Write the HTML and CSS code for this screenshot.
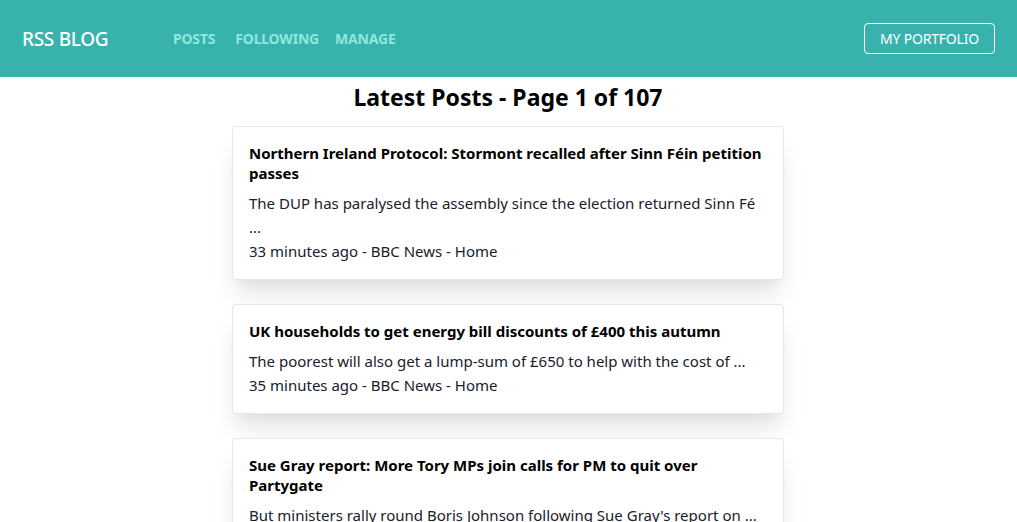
FILE: index.html
```html
<!DOCTYPE html>
<html lang="en">
<head>
<meta charset="utf-8">
<title>RSS Blog</title>
<link rel="stylesheet" href="styles.css">
</head>
<body>
<header class="topbar">
  <div class="brand">RSS BLOG</div>
  <nav class="nav">
    <a class="nav-link" href="#">POSTS</a>
    <a class="nav-link" href="#">FOLLOWING</a>
    <a class="nav-link" href="#">MANAGE</a>
  </nav>
  <a class="portfolio-btn" href="#">MY PORTFOLIO</a>
</header>
<main class="content">
  <h1 class="page-title">Latest Posts - Page 1 of 107</h1>
  <div class="posts">
    <article class="card">
      <h2 class="card-title">Northern Ireland Protocol: Stormont recalled after Sinn Féin petition passes</h2>
      <p class="card-desc">The DUP has paralysed the assembly since the election returned Sinn Fé ...</p>
      <p class="card-meta">33 minutes ago - BBC News - Home</p>
    </article>
    <article class="card">
      <h2 class="card-title">UK households to get energy bill discounts of £400 this autumn</h2>
      <p class="card-desc">The poorest will also get a lump-sum of £650 to help with the cost of ...</p>
      <p class="card-meta">35 minutes ago - BBC News - Home</p>
    </article>
    <article class="card">
      <h2 class="card-title">Sue Gray report: More Tory MPs join calls for PM to quit over Partygate</h2>
      <p class="card-desc">But ministers rally round Boris Johnson following Sue Gray's report on ...</p>
      <p class="card-meta">40 minutes ago - BBC News - Home</p>
    </article>
  </div>
</main>
</body>
</html>
```
FILE: styles.css
```css
* { box-sizing: border-box; }
html, body { margin: 0; padding: 0; }
body {
  font-family: "Noto Sans", "Open Sans", "Liberation Sans", sans-serif;
  color: #000;
  background: #fff;
}
.topbar {
  height: 77px;
  background: #38b2ac;
  display: flex;
  align-items: center;
  padding: 0 22px;
}
.brand {
  color: #fff;
  font-size: 19px;
  font-weight: 500;
  letter-spacing: -0.3px;
  width: 151px;
}
.nav {
  display: flex;
  gap: 16px;
  flex: 1;
}
.nav-link {
  color: #8fe8de;
  font-size: 14px;
  font-weight: 700;
  text-decoration: none;
  letter-spacing: -0.2px;
}
.nav-link:first-child { margin-right: 4px; }
.portfolio-btn {
  color: #fff;
  font-size: 14px;
  text-decoration: none;
  border: 1px solid #fff;
  border-radius: 4px;
  height: 31px;
  display: flex;
  align-items: center;
  padding: 0 15px;
  letter-spacing: -0.2px;
}
.content {
  padding-top: 4px;
  padding-right: 1px;
  display: flex;
  flex-direction: column;
  align-items: center;
}
.page-title {
  margin: 0 0 13px;
  font-size: 23px;
  line-height: 32px;
  font-weight: 700;
}
.posts {
  width: 552px;
  display: flex;
  flex-direction: column;
  gap: 24px;
}
.card {
  border: 1px solid #e2e8f0;
  border-radius: 4px;
  padding: 16px;
  background: #fff;
  box-shadow: 0 20px 25px -5px rgba(0,0,0,0.1), 0 10px 10px -5px rgba(0,0,0,0.04);
}
.card-title {
  margin: 0 0 8px;
  font-size: 15px;
  line-height: 20px;
  font-weight: 700;
}
.card-desc, .card-meta {
  margin: 0;
  font-size: 15px;
  line-height: 24px;
  color: #1a202c;
}
```
